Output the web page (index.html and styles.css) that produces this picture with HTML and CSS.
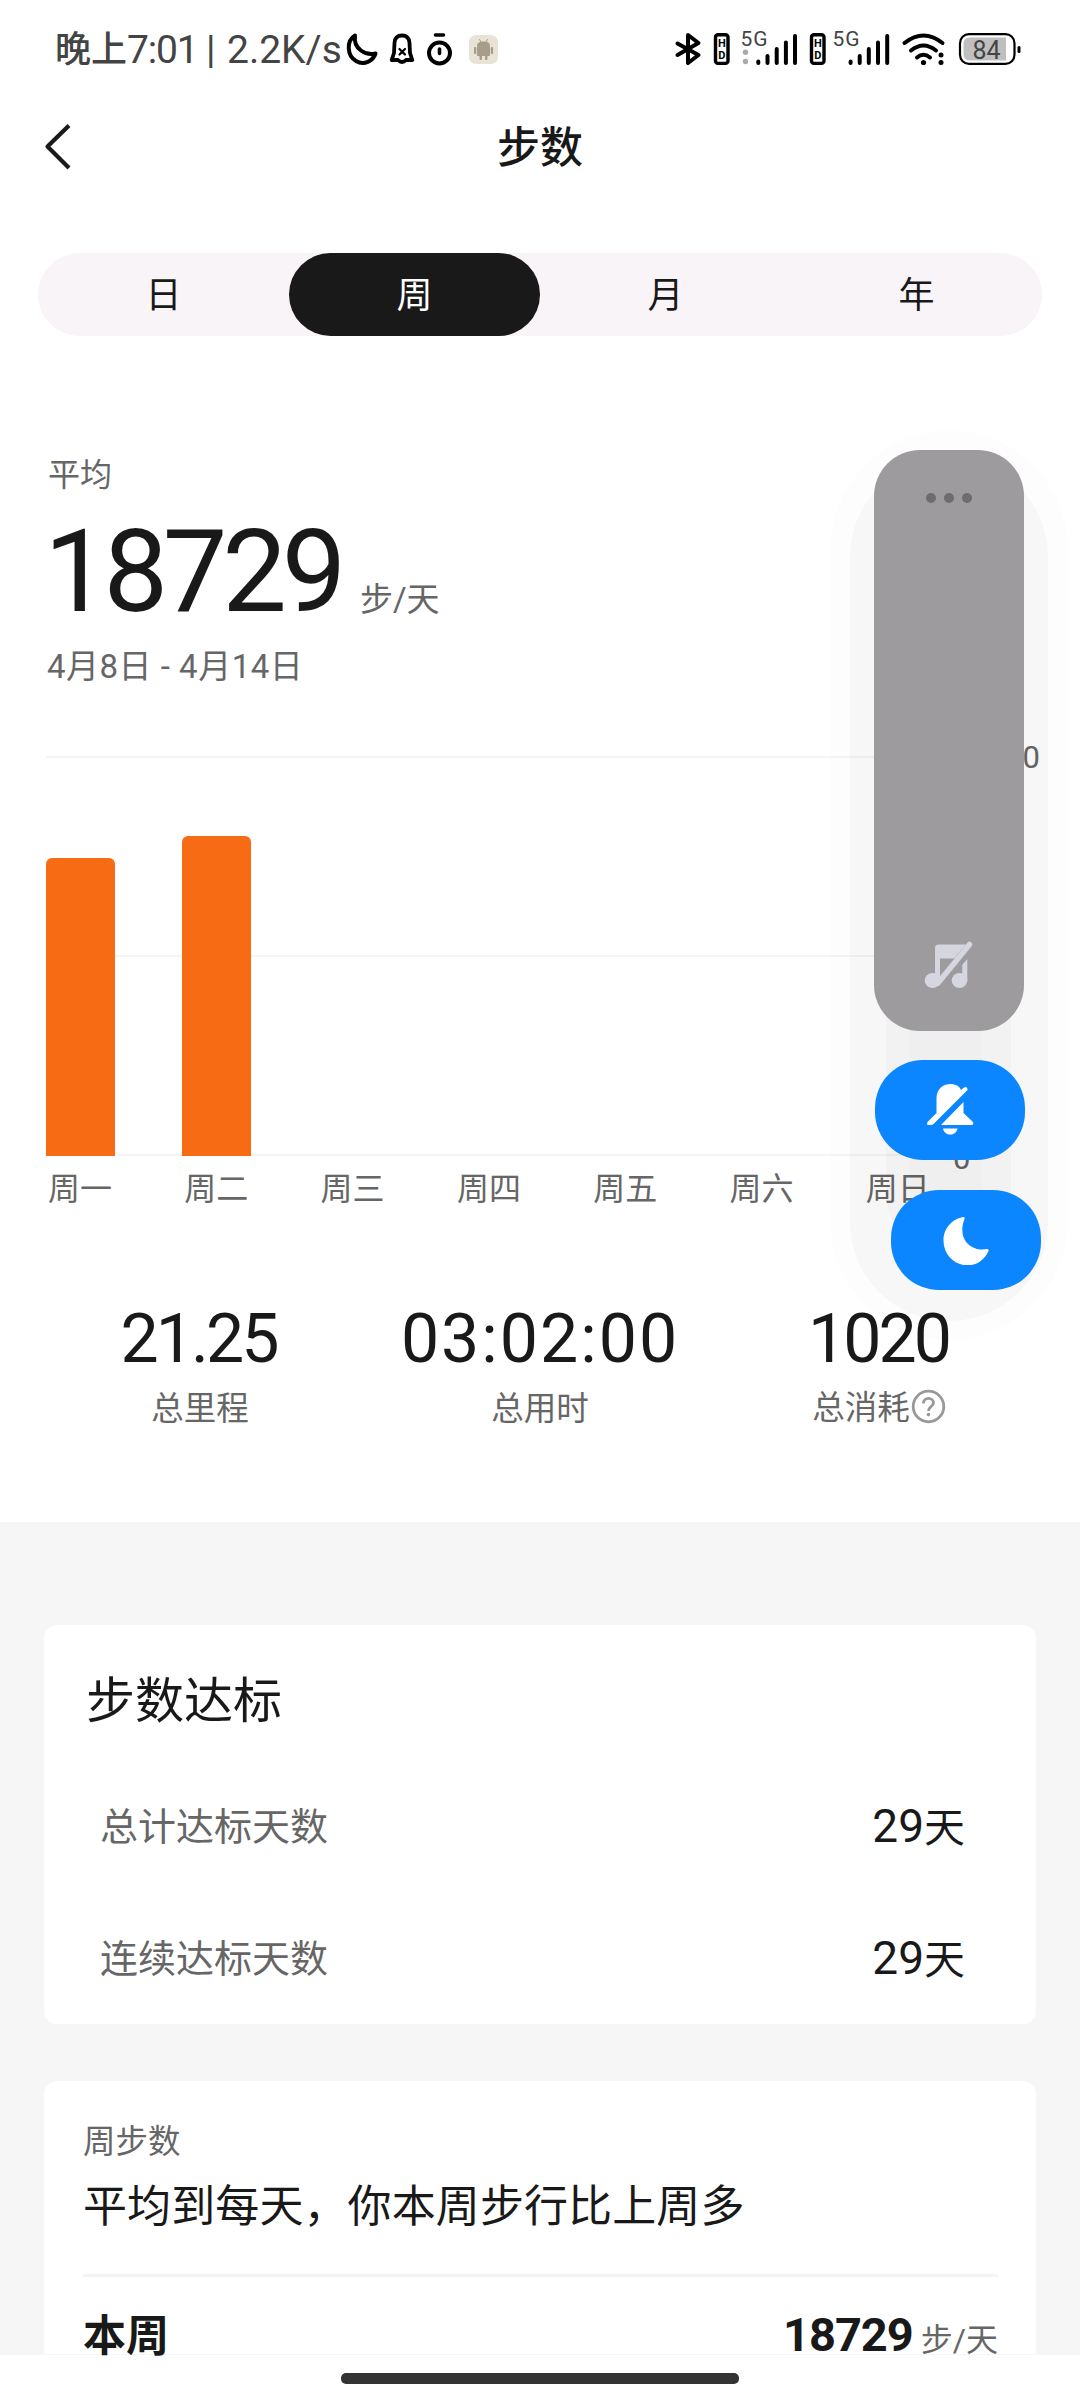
FILE: index.html
```html
<!DOCTYPE html>
<html lang="zh-CN">
<head>
<meta charset="utf-8">
<title>步数</title>
<link rel="stylesheet" href="styles.css">
</head>
<body>
<header class="status">
  <span class="status-cjk">晚上</span><span class="status-time">7:01</span><span class="status-sep">|</span><span class="status-speed">2.2K/s</span>
  <svg class="status-left-icons" width="156" height="36" viewBox="344 31 156 36" fill="none" stroke="#000" stroke-width="4" stroke-linejoin="round" stroke-linecap="round">
    <path d="M355 35.500C346 41 347 56 356 61C364 66 373 61 375.500 53.500C366 56 353 49 355 35.500Z"/>
    <path d="M394.500 43C394.500 38 397.500 35.500 402 35.500S409.500 38 409.500 43L410 53L412.300 60H406Q402 64 398 60H391.700L394 53Z" stroke-width="3.800"/>
    <path d="M399.500 49L405 54.500M405 49L399.500 54.500" stroke-width="2.200"/>
    <circle cx="439.500" cy="53" r="10.500"/><path d="M435.500 35H443.500M439.500 49V53.500" stroke-width="3.600"/>
    <rect x="469" y="35" width="29" height="29" rx="7" fill="#e9e2d6" stroke="none"/>
    <g fill="#a79d8b" stroke="none"><path d="M477 46C477 42.500 480 41.500 483.500 41.500S490 42.500 490 46Z"/><rect x="477" y="46" width="13" height="10" rx="1"/><rect x="474" y="47" width="2.300" height="7" rx="1"/><rect x="490.800" y="47" width="2.300" height="7" rx="1"/><rect x="479.500" y="54" width="2.500" height="6" rx="1"/><rect x="485" y="54" width="2.500" height="6" rx="1"/></g>
    <path d="M479.500 39.500L481 42M487.500 39.500L486 42" stroke="#a79d8b" stroke-width="1"/>
  </svg>
  <svg class="status-right-icons" width="352" height="60" viewBox="672 19 352 60" fill="none" stroke="#000" stroke-linecap="round" stroke-linejoin="round">
    <path d="M677.500 43.500L698.500 55L688 63V35L698.500 43L677.500 55" stroke-width="4"/>
    <rect x="715.500" y="34.800" width="12.500" height="28.600" rx="2.500" stroke-width="3.400"/>
    <rect x="811.500" y="34.800" width="12.500" height="28.600" rx="2.500" stroke-width="3.400"/>
    <g class="hd"><text x="721.800" y="47.300">H</text><text x="721.800" y="58.800">D</text><text x="817.800" y="47.300">H</text><text x="817.800" y="58.800">D</text></g>
    <g class="net"><text x="740.500" y="46" textLength="27">5G</text><text x="832.500" y="46" textLength="27">5G</text></g>
    <g fill="#aaa" stroke="none"><circle cx="745.500" cy="52.300" r="2.700"/><circle cx="745.500" cy="61.500" r="2.700"/></g>
    <path d="M758.300 61.500V63M767.500 56V63M776.700 49V63M785.900 42.500V63M795 36V63M850.600 61.500V63M859.700 56V63M868.800 49V63M878 42.500V63M887.200 36V63" stroke-width="4"/>
    <path d="M904.500 43Q923.500 28 942.500 43M911 50.500Q923.500 40.500 936 50.500M917 57.500Q923.500 52 930 57.500" stroke-width="4"/>
    <g fill="#000" stroke="none"><circle cx="923.500" cy="62.500" r="2.600"/><circle cx="941" cy="55" r="2.500"/><circle cx="941" cy="62.500" r="2.500"/><rect x="1017.500" y="46" width="3" height="7" rx="1.500"/></g>
    <rect x="960" y="34.200" width="54.500" height="29.600" rx="9" stroke-width="2.200"/>
    <path d="M970 37.500H1006V60.500H970Q963.500 60.500 963.500 54V44Q963.500 37.500 970 37.500Z" fill="#bfbfbf" stroke="none"/>
    <text class="batt" x="986.500" y="58.500">84</text>
  </svg>
</header>
<nav class="titlebar">
  <svg class="back" width="32" height="52" viewBox="42 121 32 52" fill="none" stroke="#1a1a1a" stroke-width="4.200" stroke-linejoin="round"><path d="M69 125.500L47.500 146.500L69 168"/></svg>
  <h1 class="title">步数</h1>
</nav>
<main class="page">
  <section class="summary">
    <div class="tabs"><span class="tab">日</span><span class="tab active">周</span><span class="tab">月</span><span class="tab">年</span></div>
    <div class="avg-label">平均</div>
    <div class="avg"><span class="avg-num">18729</span><span class="unit">步/天</span></div>
    <div class="range">4月8日 - 4月14日</div>
    <div class="chart">
      <div class="axis"><span>0</span></div>
      <div class="bars"><i class="bar" style="height:298px"></i><i class="bar" style="height:320px"></i></div>
    </div>
    <div class="days"><span>周一</span><span>周二</span><span>周三</span><span>周四</span><span>周五</span><span>周六</span><span>周日</span><b class="zero">0</b></div>
    <div class="stats">
      <div class="stat"><strong class="tight">21.25</strong><span>总里程</span></div>
      <div class="stat"><strong class="wide">03:02:00</strong><span>总用时</span></div>
      <div class="stat"><strong class="tight">1020</strong><span class="help">总消耗<svg width="35" height="35" viewBox="0 0 35 35" fill="none" stroke="#999" stroke-width="2.800"><circle cx="17.500" cy="17.500" r="15.300"/><path d="M12.500 14.500C12.500 7.500 22.500 8 22.500 14C22.500 17.500 17.500 17.500 17.500 22"/><circle cx="17.500" cy="25.600" r="1.800" fill="#999" stroke="none"/></svg></span></div>
    </div>
  </section>
  <section class="cards">
    <article class="card goal">
      <h2>步数达标</h2>
      <div class="goal-row"><span>总计达标天数</span><b><i>29</i>天</b></div>
      <div class="goal-row"><span>连续达标天数</span><b><i>29</i>天</b></div>
    </article>
    <article class="card week">
      <div class="week-label">周步数</div>
      <div class="week-text">平均到每天，你本周步行比上周多</div>
      <div class="week-row"><strong>本周</strong><span><b>18729</b>步/天</span></div>
    </article>
  </section>
</main>
<footer class="home"><i></i></footer>

<aside class="volume">
  <div class="halo outer"></div><div class="halo middle"></div><div class="halo inner"></div><div class="halo core"></div>
  <div class="slider">
    <svg width="40" height="12" viewBox="0 0 40 12" fill="#6d6c6e"><circle cx="2" cy="6" r="5"/><circle cx="20" cy="6" r="5"/><circle cx="38" cy="6" r="5"/></svg>
    <svg width="50" height="50" viewBox="925 938 50 50">
      <g fill="#d5d6e0"><ellipse cx="933.500" cy="979.500" rx="7.800" ry="7.600"/><ellipse cx="960.500" cy="979.500" rx="7.800" ry="7.600"/><path d="M963.300 964L968.300 958V980H963.300Z"/></g>
      <path d="M936 958V947Q936 943.500 939.500 943.500H967L955 957.500H941V980H936Z" fill="#d5d6e0"/>
      <path d="M939 982L970.500 943.500" stroke="#d5d6e0" stroke-width="5.500" stroke-linecap="round"/>
    </svg>
  </div>
  <div class="pill mute">
    <svg width="50" height="54" viewBox="925 1083 50 54" fill="#fff"><path d="M928 1125Q926.500 1125 927.500 1122L936.500 1113V1098C937 1081 958 1081 961 1090L964 1087.500Q967.500 1086 967.500 1090L933.500 1124Q932.500 1125 931 1125ZM941 1125L963.500 1102V1113L973 1122Q974 1125 971.500 1125ZM943 1128.500H957.500C956 1136.500 944.500 1136.500 943 1128.500Z"/></svg>
  </div>
  <div class="pill dnd">
    <svg width="50" height="50" viewBox="941 1214 50 50" fill="#fff"><path d="M963.500 1216Q965 1216 964.500 1218C957 1237 970 1251 987 1248Q989 1248 988.500 1250C977 1275 943 1265 943.500 1239C943.500 1228 952 1217.500 963.500 1216Z"/></svg>
  </div>
</aside>
</body>
</html>
```
FILE: styles.css
```css
* { box-sizing: border-box; }
body {
  margin: 0;
  width: 1080px;
  height: 2400px;
  position: relative;
  overflow: hidden;
  display: flex;
  flex-direction: column;
  background: #fff;
  color: #191919;
  font-family: Roboto, "Noto Sans CJK SC", sans-serif;
  font-weight: 400;
}
svg { display: block; flex: none; }
i { font-style: normal; }

.status { height: 98px; flex: none; display: flex; align-items: center; padding: 0 55px; color: #444; font-size: 39px; line-height: 50px; white-space: nowrap; }
.status > span { position: relative; top: 1px; }
.status-cjk { font-size: 36px; width: 72px; font-weight: 500; }
.status-time { width: 79px; letter-spacing: -1.2px; }
.status-sep { width: 21px; }
.status-speed { width: 117px; }
.status-right-icons { margin-left: 172px; }
.status text { font-family: Roboto, sans-serif; stroke: none; }
.hd text { font-size: 11px; font-weight: 700; fill: #000; text-anchor: middle; }
.net text { font-size: 21px; fill: #444; }
.status .batt { font-size: 25px; fill: #444; text-anchor: middle; }

.titlebar { height: 98px; flex: none; display: flex; align-items: center; justify-content: center; padding: 0 42px; }
.title { flex: 1; margin: 2px 32px 0 0; text-align: center; font-size: 43px; font-weight: 500; line-height: 60px; }

.page { flex: none; height: 2159px; }
.summary { padding: 57px 38px 93px; height: 1326px; color: #666; }
.tabs { display: flex; height: 83px; border-radius: 42px; background: #f8f4f8; }
.tab { flex: 1; display: flex; align-items: center; justify-content: center; border-radius: 42px; color: #191919; font-size: 36px; line-height: 50px; padding-top: 2px; }
.tab.active { background: #191919; color: #fff; }
.avg-label { margin: 119px 0 0 10px; font-size: 32px; line-height: 40px; }
.avg { display: flex; align-items: baseline; height: 100px; margin: 27px 0 0 6px; }
.avg-num { color: #191919; font-size: 115px; line-height: 100px; letter-spacing: -5.200px; width: 316px; }
.unit { font-size: 33px; line-height: 40px; }
.range { margin: 25px 0 0 9px; font-size: 33px; line-height: 40px; white-space: pre; letter-spacing: .5px; }

.chart { display: grid; height: 400px; margin: 69px 0 0 8px; }
.axis, .bars { grid-area: 1 / 1; }
.axis { width: 870px; background: linear-gradient(#f5f5f5, #f5f5f5) 0 0 / 100% 2px no-repeat, linear-gradient(#f5f5f5, #f5f5f5) 0 199px / 100% 2px no-repeat, linear-gradient(#f5f5f5, #f5f5f5) 0 398px / 100% 2px no-repeat; }
.axis span { display: block; margin: -18px -124px 0 0; text-align: right; font-size: 31px; line-height: 40px; }
.bars { display: flex; align-items: flex-end; gap: 67px; }
.bar { width: 69px; background: #f76b15; border-radius: 6px 6px 0 0; }
.days { display: flex; margin: 13px 0 0 10px; font-size: 32px; line-height: 40px; }
.days span { width: 136.300px; flex: none; }
.zero { font-weight: 400; font-size: 31px; margin: -30px 0 0 -49px; height: 40px; }

.stats { display: flex; margin: 95px -8px 0; }
.stat { flex: 1; display: flex; flex-direction: column; align-items: center; gap: 15px; }
.stat strong { color: #191919; font-weight: 400; font-size: 68px; line-height: 70px; letter-spacing: -1px; }
.stat .tight { letter-spacing: -3px; padding-right: 3px; }
.stat .wide { letter-spacing: 2px; }
.stat span { font-size: 32.500px; line-height: 40px; }
.stat .help { display: flex; align-items: center; gap: 1px; position: relative; top: -1px; left: -1px; }
.help svg { margin-top: -4px; }

.cards { background: #f6f6f6; padding: 103px 44px 0; display: flex; flex-direction: column; gap: 57px; height: 833px; }
.card { background: #fff; border-radius: 13px; flex: none; }
.goal { height: 399px; padding: 47px 71px 0 42px; }
.goal h2 { margin: 0 0 65px; font-size: 49px; line-height: 60px; font-weight: 400; }
.goal-row { display: flex; justify-content: space-between; align-items: center; height: 60px; margin-bottom: 72px; padding-left: 14px; font-size: 38px; line-height: 60px; color: #666; }
.goal-row b { color: #191919; font-weight: 400; font-size: 41px; }
.goal-row i { font-size: 46px; }
.week { height: 273px; padding: 41px 38px 0 39px; border-radius: 13px 13px 0 0; }
.week-label { font-size: 32.500px; line-height: 40px; color: #666; }
.week-text { margin-top: 17px; font-size: 44px; line-height: 56px; letter-spacing: .1px; }
.week-row { margin-top: 39px; border-top: 3px solid #f4f4f4; padding-top: 28px; display: flex; justify-content: space-between; align-items: baseline; line-height: 60px; }
.week-row strong { font-size: 43px; font-weight: 700; }
.week-row span { font-size: 32px; color: #666; }
.week-row b { font-size: 47px; color: #191919; margin-right: 8px; letter-spacing: -1px; }
.home { flex: none; height: 45px; padding-top: 18px; display: flex; justify-content: center; }
.home i { width: 398px; height: 11px; border-radius: 5px; background: #333; }

.volume { position: absolute; left: 826px; top: 430px; width: 254px; height: 910px; }
.halo, .slider, .pill { position: absolute; }
.outer { left: 4px; top: 0; width: 238px; height: 910px; border-radius: 119px; background: rgba(150, 0, 130, .008); box-shadow: 0 0 14px rgba(150, 0, 130, .008); }
.middle { left: 24px; top: 28px; width: 198px; height: 863px; border-radius: 99px; background: rgba(0, 20, 0, .027); }
.inner { left: 60px; top: 500px; width: 125px; height: 325px; border-radius: 62px; background: rgba(25, 0, 10, .02); }
.core { left: 84px; top: 540px; width: 72px; height: 260px; border-radius: 36px; background: rgba(50, 0, 15, .012); }
.slider { left: 48px; top: 20px; width: 150px; height: 581px; border-radius: 46px; background: #9d9b9e; display: flex; flex-direction: column; align-items: center; justify-content: space-between; padding: 42px 0 42px; }
.slider svg { overflow: visible; }
.pill { width: 150px; height: 100px; border-radius: 48px; background: #0b86ff; display: flex; align-items: center; justify-content: center; }
.mute { left: 49px; top: 630px; }
.dnd { left: 65px; top: 760px; }
```
